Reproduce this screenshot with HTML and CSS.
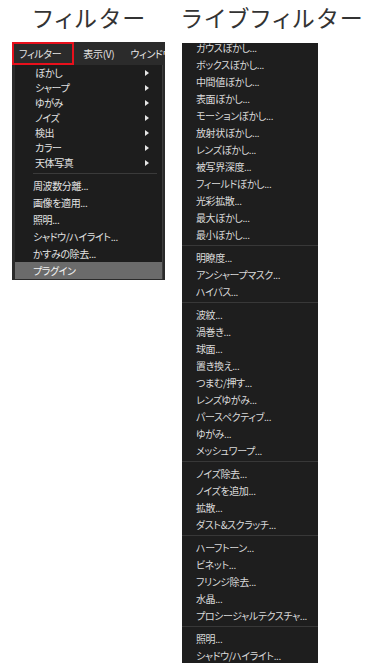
FILE: index.html
```html
<!DOCTYPE html>
<html lang="ja">
<head>
    <meta charset="UTF-8">
    <meta name="viewport" content="width=device-width, initial-scale=1.0">
    <title>フィルター / ライブフィルター</title>
    <link rel="stylesheet" href="styles.css">
</head>
<body>

    <div class="page">

        <!-- Photoshop style menu -->
        <div class="col col-left">
            <h2 class="title title-center">フィルター</h2>
            <div class="app">
                <div class="menubar">
                    <span class="bar-item active">フィルター</span>
                    <span class="bar-item">表示(V)</span>
                    <span class="bar-item">ウィンドウ</span>
                </div>
                <ul class="dropdown">
                    <li class="sub">ぼかし<i class="arrow"></i></li>
                    <li class="sub">シャープ<i class="arrow"></i></li>
                    <li class="sub">ゆがみ<i class="arrow"></i></li>
                    <li class="sub">ノイズ<i class="arrow"></i></li>
                    <li class="sub">検出<i class="arrow"></i></li>
                    <li class="sub">カラー<i class="arrow"></i></li>
                    <li class="sub">天体写真<i class="arrow"></i></li>
                    <li class="sep"></li>
                    <li>周波数分離...</li>
                    <li>画像を適用...</li>
                    <li>照明...</li>
                    <li>シャドウ/ハイライト...</li>
                    <li>かすみの除去...</li>
                    <li class="hover">プラグイン</li>
                </ul>
            </div>
        </div>

        <!-- Live filter list -->
        <div class="col col-right">
            <h2 class="title">ライブフィルター</h2>
            <div class="live">
                <ul class="live-list">
                    <li>ガウスぼかし...</li>
                    <li>ボックスぼかし...</li>
                    <li>中間値ぼかし...</li>
                    <li>表面ぼかし...</li>
                    <li>モーションぼかし...</li>
                    <li>放射状ぼかし...</li>
                    <li>レンズぼかし...</li>
                    <li>被写界深度...</li>
                    <li>フィールドぼかし...</li>
                    <li>光彩拡散...</li>
                    <li>最大ぼかし...</li>
                    <li>最小ぼかし...</li>
                    <li class="sep"></li>
                    <li>明瞭度...</li>
                    <li>アンシャープマスク...</li>
                    <li>ハイパス...</li>
                    <li class="sep"></li>
                    <li>波紋...</li>
                    <li>渦巻き...</li>
                    <li>球面...</li>
                    <li>置き換え...</li>
                    <li>つまむ/押す...</li>
                    <li>レンズゆがみ...</li>
                    <li>パースペクティブ...</li>
                    <li>ゆがみ...</li>
                    <li>メッシュワープ...</li>
                    <li class="sep"></li>
                    <li>ノイズ除去...</li>
                    <li>ノイズを追加...</li>
                    <li>拡散...</li>
                    <li>ダスト&amp;スクラッチ...</li>
                    <li class="sep"></li>
                    <li>ハーフトーン...</li>
                    <li>ビネット...</li>
                    <li>フリンジ除去...</li>
                    <li>水晶...</li>
                    <li>プロシージャルテクスチャ...</li>
                    <li class="sep"></li>
                    <li>照明...</li>
                    <li>シャドウ/ハイライト...</li>
                </ul>
            </div>
        </div>

    </div>

</body>
</html>
```

FILE: styles.css
```css
body {
    margin: 0;
    background-color: #ffffff;
    font-family: "Noto Sans CJK JP", "Noto Sans", sans-serif;
    font-feature-settings: "palt";
}

ul {
    list-style: none;
    margin: 0;
    padding: 0;
}

.page {
    display: flex;
    padding-left: 12px;
    gap: 17px;
}

.title {
    margin: 0;
    height: 42px;
    line-height: 34px;
    font-size: 23px;
    font-weight: normal;
    letter-spacing: 2.8px;
    color: #333333;
    white-space: nowrap;
}

.title-center {
    text-align: center;
    padding-left: 4px;
}

.col-left {
    width: 153px;
}

.col-right {
    width: 136px;
}

/* left: menu */
.app {
    background-color: #2a2a2a;
    padding-bottom: 1px;
}

.menubar {
    display: flex;
    height: 23px;
    background-color: #2b2b2b;
    overflow: hidden;
    white-space: nowrap;
    font-size: 10px;
    letter-spacing: -0.3px;
    color: #e6e6e6;
}

.bar-item {
    line-height: 19px;
    padding: 0 5px;
    border: 2px solid transparent;
}

.bar-item.active {
    border-color: #e8101c;
    padding: 0 11px 0 5px;
}

.bar-item + .bar-item {
    margin-left: 2px;
}

.dropdown {
    margin: 0 2px 0 3px;
    background-color: #1d1d1d;
    border-right: 1px solid #3e3e3e;
    font-size: 10px;
    letter-spacing: -0.4px;
    color: #e2e2e2;
}

.dropdown li {
    position: relative;
    height: 17px;
    line-height: 17px;
    padding-left: 18px;
    white-space: nowrap;
}

.dropdown li.sub {
    height: 15px;
    line-height: 15px;
    padding-left: 20px;
}

.dropdown li.sep {
    height: 7px;
    margin: 0 5px 0 18px;
    padding: 0;
    background: linear-gradient(#1d1d1d 3px, #3a3a3a 3px, #3a3a3a 4px, #1d1d1d 4px);
}

.dropdown li.hover {
    background-color: #6b6b6b;
    color: #f2f2f2;
}

.arrow {
    position: absolute;
    right: 13px;
    top: 5px;
    width: 0;
    height: 0;
    border-top: 3px solid transparent;
    border-bottom: 3px solid transparent;
    border-left: 4px solid #e6e6e6;
}

/* right: live filters */
.live {
    margin-top: 1px;
    height: 620px;
    overflow: hidden;
    background-color: #1e1e1e;
}

.live-list {
    margin-top: -4px;
    font-size: 10px;
    letter-spacing: -0.4px;
    color: #dadada;
}

.live-list li {
    height: 17px;
    line-height: 17px;
    padding-left: 14px;
    white-space: nowrap;
}

.live-list li.sep {
    height: 6px;
    padding: 0;
    background: linear-gradient(#1e1e1e 2px, #383838 2px, #383838 3px, #1e1e1e 3px);
}
```
